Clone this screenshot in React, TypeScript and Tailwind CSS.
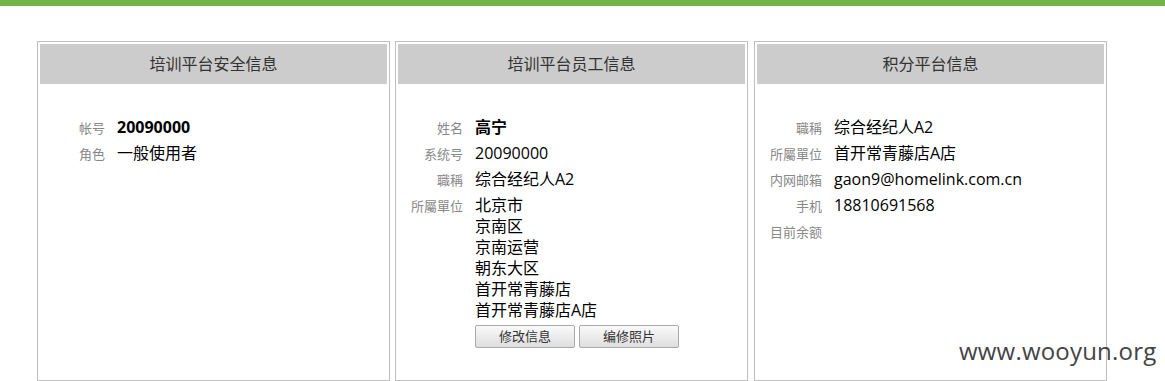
import type { ReactNode } from 'react';

const font = { fontFamily: '"Open Sans", "Noto Sans CJK SC", sans-serif' };

type Row = { label: string; value?: ReactNode; bold?: boolean };

function Panel({ title, rows, children }: { title: string; rows: Row[]; children?: ReactNode }) {
  return (
    <div className="w-[353px] h-[340px] border border-[#c0c0c0] p-[2px] bg-white">
      <div className="h-[40px] bg-[#cccccc] flex items-center justify-center text-[16px] text-[#333]">
        {title}
      </div>
      <div className="mt-[31px]">
        {rows.map((r, i) => (
          <div key={i} className="flex">
            <div className="w-[77px] shrink-0 pr-[12px] text-right text-[13px] leading-[21px] pt-[3px] pb-[2px] text-[#888] whitespace-nowrap">
              {r.label}
            </div>
            <div className={`pt-[2px] pb-[3px] text-[16px] leading-[21px] text-black ${r.bold ? 'font-bold' : ''}`}>
              {r.value}
            </div>
          </div>
        ))}
        {children}
      </div>
    </div>
  );
}

function Btn({ children }: { children: ReactNode }) {
  return (
    <button className="w-[100px] h-[23px] border border-[#aaa] rounded-[2px] bg-gradient-to-b from-[#fafafa] to-[#dedede] text-[13px] leading-[21px] text-[#333]">
      {children}
    </button>
  );
}

export default function App() {
  const units = ['北京市', '京南区', '京南运营', '朝东大区', '首开常青藤店', '首开常青藤店A店'];
  return (
    <div className="relative w-[1165px] h-[381px] bg-white overflow-hidden" style={font}>
      <div className="h-[6px] bg-[#72b64b]" />
      <div className="flex gap-[5px] ml-[37px] mt-[35px]">
        <Panel
          title="培训平台安全信息"
          rows={[
            { label: '帐号', value: '20090000', bold: true },
            { label: '角色', value: '一般使用者' },
          ]}
        />
        <Panel
          title="培训平台员工信息"
          rows={[
            { label: '姓名', value: '高宁', bold: true },
            { label: '系统号', value: '20090000' },
            { label: '職稱', value: '综合经纪人A2' },
            {
              label: '所屬單位',
              value: (
                <div className="flex flex-col">
                  {units.map((u) => (
                    <span key={u}>{u}</span>
                  ))}
                </div>
              ),
            },
          ]}
        >
          <div className="flex gap-[4px] ml-[77px] mt-[1px]">
            <Btn>修改信息</Btn>
            <Btn>编修照片</Btn>
          </div>
        </Panel>
        <div className="ml-[1px]">
          <Panel
            title="积分平台信息"
            rows={[
              { label: '職稱', value: '综合经纪人A2' },
              { label: '所屬單位', value: '首开常青藤店A店' },
              { label: '内网邮箱', value: 'gaon9@homelink.com.cn' },
              { label: '手机', value: '18810691568' },
              { label: '目前余额', value: '' },
            ]}
          />
        </div>
      </div>
      <div className="absolute left-[959px] top-[334px] text-[24px] leading-[34px] text-[#444] tracking-[0.2px]">
        www.wooyun.org
      </div>
    </div>
  );
}
